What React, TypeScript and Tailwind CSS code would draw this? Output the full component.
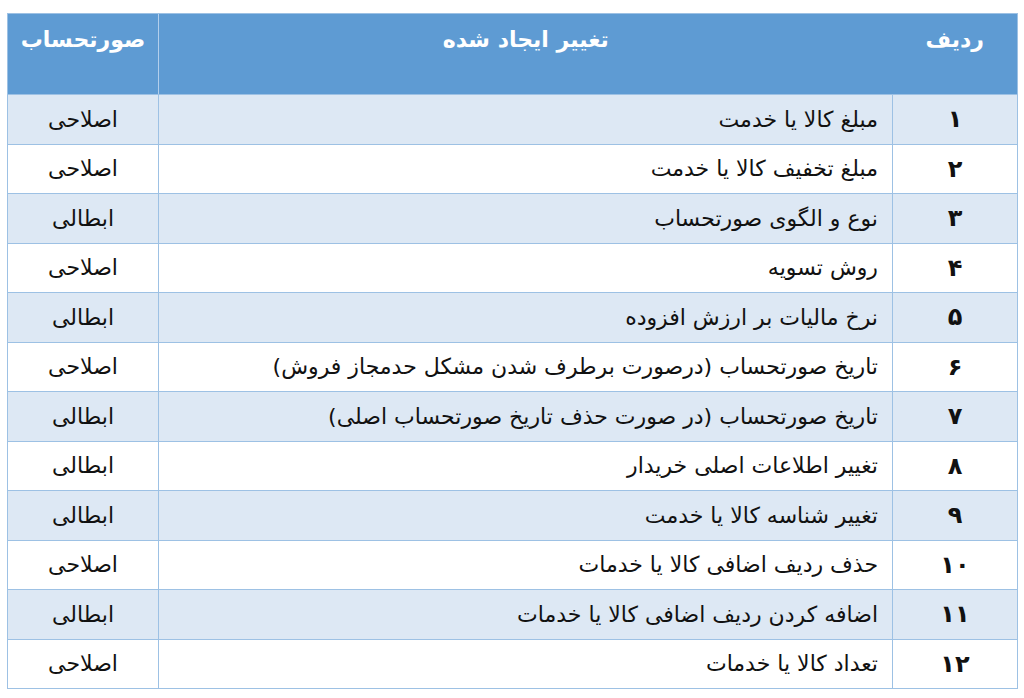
const rows: { n: string; change: string; kind: string }[] = [
  { n: "۱", change: "مبلغ کالا یا خدمت", kind: "اصلاحی" },
  { n: "۲", change: "مبلغ تخفیف کالا یا خدمت", kind: "اصلاحی" },
  { n: "۳", change: "نوع و الگوی صورتحساب", kind: "ابطالی" },
  { n: "۴", change: "روش تسویه", kind: "اصلاحی" },
  { n: "۵", change: "نرخ مالیات بر ارزش افزوده", kind: "ابطالی" },
  { n: "۶", change: "تاریخ صورتحساب (درصورت برطرف شدن مشکل حدمجاز فروش)", kind: "اصلاحی" },
  { n: "۷", change: "تاریخ صورتحساب (در صورت حذف تاریخ صورتحساب اصلی)", kind: "ابطالی" },
  { n: "۸", change: "تغییر اطلاعات اصلی خریدار", kind: "ابطالی" },
  { n: "۹", change: "تغییر شناسه کالا یا خدمت", kind: "ابطالی" },
  { n: "۱۰", change: "حذف ردیف اضافی کالا یا خدمات", kind: "اصلاحی" },
  { n: "۱۱", change: "اضافه کردن ردیف اضافی کالا یا خدمات", kind: "ابطالی" },
  { n: "۱۲", change: "تعداد کالا یا خدمات", kind: "اصلاحی" },
];

export default function App() {
  return (
    <div
      className="h-[698px] w-[1024px] bg-white pl-[7px] pt-[13px]"
      style={{ fontFamily: '"DejaVu Sans", "Noto Sans", sans-serif' }}
    >
      <table dir="rtl" className="w-[1010px] table-fixed border-collapse text-[22px] text-[#111]">
        <colgroup>
          <col className="w-[125px]" />
          <col className="w-[734px]" />
          <col className="w-[151px]" />
        </colgroup>
        <thead>
          <tr className="h-[81px] bg-[#5e9bd3] align-top text-white">
            <th className="border-y border-r border-[#9dc1e4] pt-[9px] text-center text-[22px] font-bold">ردیف</th>
            <th className="border-y border-[#9dc1e4] pt-[9px] text-center text-[22px] font-bold">تغییر ایجاد شده</th>
            <th className="border-y border-l border-r border-[#9dc1e4] border-r-[#b3cfec] pt-[9px] text-center text-[22px] font-bold">
              صورتحساب
            </th>
          </tr>
        </thead>
        <tbody>
          {rows.map((r, i) => (
            <tr key={r.n} className={`h-[49.5px] ${i % 2 === 0 ? "bg-[#dde8f4]" : "bg-white"}`}>
              <td className="border border-[#9dc1e4] text-center text-[24px] font-bold">{r.n}</td>
              <td className="border border-[#9dc1e4] pr-[14px] text-right">{r.change}</td>
              <td className="border border-[#9dc1e4] text-center">{r.kind}</td>
            </tr>
          ))}
        </tbody>
      </table>
    </div>
  );
}
